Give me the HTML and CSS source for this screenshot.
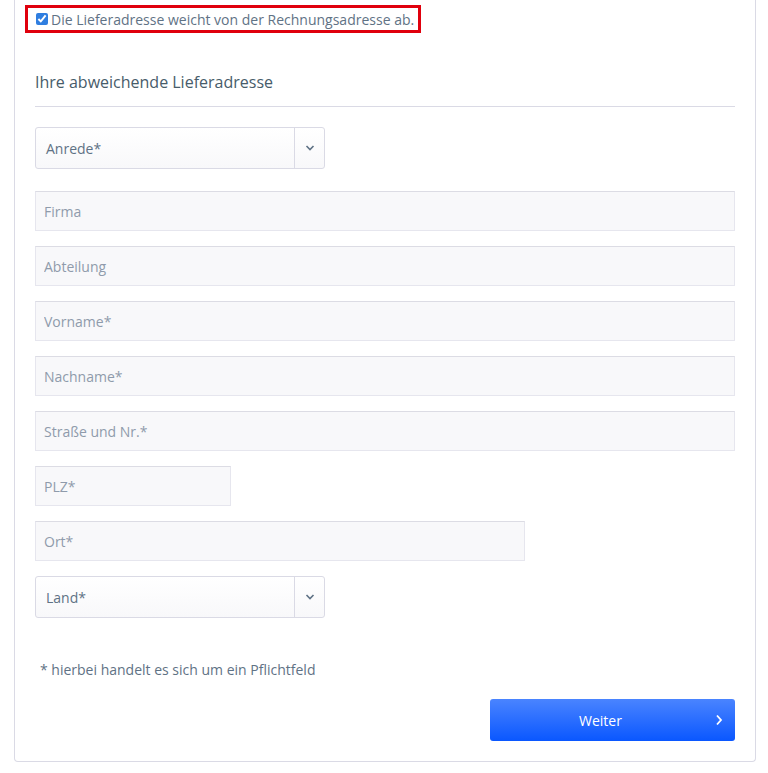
FILE: index.html
```html
<!DOCTYPE html>
<html lang="de">
<head>
<meta charset="utf-8">
<link rel="stylesheet" href="styles.css">
</head>
<body>
<div class="card">
  <label class="shipping-toggle">
    <input type="checkbox" class="toggle-box" checked>
    <span>Die Lieferadresse weicht von der Rechnungsadresse ab.</span>
  </label>

  <h2 class="section-title">Ihre abweichende Lieferadresse</h2>

  <div class="form">
    <div class="select-field w-select">
      <span class="select-value">Anrede*</span>
      <span class="select-arrow">
        <svg width="10" height="6" viewBox="0 0 10 6"><path d="M1.5 1 L5 4.5 L8.5 1" fill="none" stroke="#5f7285" stroke-width="1.6"/></svg>
      </span>
    </div>
    <input class="text-field gap-top" type="text" placeholder="Firma">
    <input class="text-field" type="text" placeholder="Abteilung">
    <input class="text-field" type="text" placeholder="Vorname*">
    <input class="text-field" type="text" placeholder="Nachname*">
    <input class="text-field" type="text" placeholder="Straße und Nr.*">
    <input class="text-field w-zip" type="text" placeholder="PLZ*">
    <input class="text-field w-city" type="text" placeholder="Ort*">
    <div class="select-field w-select">
      <span class="select-value">Land*</span>
      <span class="select-arrow">
        <svg width="10" height="6" viewBox="0 0 10 6"><path d="M1.5 1 L5 4.5 L8.5 1" fill="none" stroke="#5f7285" stroke-width="1.6"/></svg>
      </span>
    </div>
  </div>

  <p class="required-note">* hierbei handelt es sich um ein Pflichtfeld</p>

  <div class="actions">
    <button class="btn-primary" type="button">
      <span class="btn-label">Weiter</span>
      <svg class="btn-icon" width="8" height="12" viewBox="0 0 8 12"><path d="M2 1.5 L6 6 L2 10.5" fill="none" stroke="#fff" stroke-width="1.8"/></svg>
    </button>
  </div>
</div>
</body>
</html>
```

FILE: styles.css
```css
* { box-sizing: border-box; }

html, body {
  margin: 0;
  padding: 0;
  background: #fff;
}

body {
  font-family: "Open Sans", "Liberation Sans", sans-serif;
  font-size: 14px;
  color: #5f7285;
}

.card {
  margin-left: 14px;
  width: 742px;
  height: 762px;
  border: 1px solid #dadae5;
  border-top: none;
  border-radius: 0 0 4px 4px;
  padding: 5px 20px 0 20px;
}

.shipping-toggle {
  display: inline-flex;
  align-items: center;
  gap: 3px;
  margin-left: -10px;
  height: 28px;
  padding: 0 4px 0 8px;
  border: 3px solid #e0000d;
  color: #5f7285;
  font-size: 14px;
  cursor: pointer;
}

.toggle-box {
  margin: 0;
  width: 12px;
  height: 12px;
  accent-color: #2f7ee0;
}

.section-title {
  margin: 36px 0 0 0;
  padding-bottom: 11px;
  border-bottom: 1px solid #dadae5;
  font-size: 16px;
  font-weight: 400;
  line-height: 26px;
  color: #475c6a;
}

.form {
  display: flex;
  flex-direction: column;
  align-items: flex-start;
  gap: 15px;
  margin-top: 20px;
}

.select-field {
  display: flex;
  align-items: stretch;
  height: 42px;
  border: 1px solid #dadae5;
  border-radius: 3px;
  background: linear-gradient(#ffffff, #f8f8fa);
}

.w-select { width: 290px; }

.select-value {
  flex: 1;
  display: flex;
  align-items: center;
  padding-left: 10px;
  color: #5f7285;
  font-size: 14px;
}

.select-arrow {
  width: 30px;
  display: flex;
  align-items: center;
  justify-content: center;
  border-left: 1px solid #dadae5;
}

.text-field {
  width: 700px;
  height: 40px;
  margin: 0;
  padding: 0 8px;
  border: 1px solid #e6e6ee;
  border-top-color: #dcdce4;
  border-radius: 0;
  background: #f8f8fa;
  font-family: "Open Sans", "Liberation Sans", sans-serif;
  font-size: 14px;
  color: #5f7285;
  outline: none;
}

.text-field::placeholder { color: #8f9bab; }

.gap-top { margin-top: 7px; }
.w-zip { width: 196px; }
.w-city { width: 490px; }

.required-note {
  margin: 41px 0 0 5px;
  line-height: 22px;
  font-size: 14px;
  color: #5f7285;
}

.actions {
  display: flex;
  justify-content: flex-end;
  margin-top: 18px;
}

.btn-primary {
  position: relative;
  width: 245px;
  height: 42px;
  border: none;
  border-radius: 3px;
  background: linear-gradient(#4a84ff, #0a57ff);
  color: #fff;
  font-family: "Open Sans", "Liberation Sans", sans-serif;
  font-size: 14px;
  display: flex;
  align-items: center;
  justify-content: center;
  padding: 0 24px 0 0;
  cursor: pointer;
}

.btn-icon {
  position: absolute;
  right: 12px;
  top: 15px;
}
```
